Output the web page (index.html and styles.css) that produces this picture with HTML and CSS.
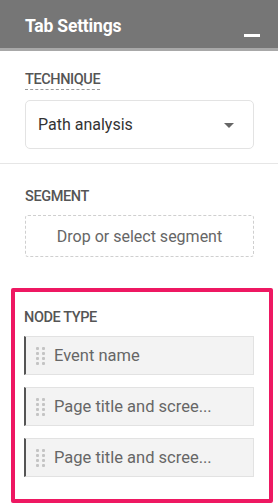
FILE: index.html
```html
<!DOCTYPE html>
<html>
<head>
<meta charset="utf-8">
<link rel="stylesheet" href="styles.css">
</head>
<body>
<div class="panel">
  <div class="header">
    <span class="title">Tab Settings</span>
    <span class="minimize"></span>
  </div>
  <div class="section first">
    <div class="label dashed">TECHNIQUE</div>
    <div class="dropdown">
      <span>Path analysis</span>
      <svg class="caret" width="10" height="5" viewBox="0 0 10 5"><path d="M0 0 L10 0 L5 5 Z" fill="#666"/></svg>
    </div>
  </div>
  <div class="section second">
    <div class="label">SEGMENT</div>
    <div class="dropzone">Drop or select segment</div>
  </div>
  <div class="highlight">
    <div class="label">NODE TYPE</div>
    <div class="items">
      <div class="item"><span class="grip"><i></i><i></i><i></i><i></i><i></i><i></i><i></i><i></i></span><span class="text">Event name</span></div>
      <div class="item"><span class="grip"><i></i><i></i><i></i><i></i><i></i><i></i><i></i><i></i></span><span class="text">Page title and scree...</span></div>
      <div class="item"><span class="grip"><i></i><i></i><i></i><i></i><i></i><i></i><i></i><i></i></span><span class="text">Page title and scree...</span></div>
    </div>
  </div>
</div>
</body>
</html>
```
FILE: styles.css
```css
* { box-sizing: border-box; }
html, body { margin: 0; padding: 0; background: #fff; }
body { font-family: Roboto, "Noto Sans", Arial, sans-serif; width: 278px; height: 504px; overflow: hidden; }
.panel { width: 278px; }
.header {
  height: 51px;
  background: #767676;
  border-bottom: 3px solid #a8a8a8;
  display: flex;
  align-items: center;
  justify-content: space-between;
  padding: 0 18px 0 25px;
}
.title { color: #fff; font-weight: 700; font-size: 17.5px; letter-spacing: -0.2px; margin-top: 3px; }
.minimize { width: 16px; height: 3px; background: #fff; margin-top: 22px; }
.section { padding: 0 24px 0 25px; }
.section.first { padding-top: 21px; padding-bottom: 14px; border-bottom: 1px solid #e6e6e6; }
.section.second { padding-top: 25px; }
.label { font-size: 14.5px; font-weight: 500; color: #555; line-height: 16px; letter-spacing: -0.4px; }
.label.dashed { width: fit-content; border-bottom: 1px dashed #9a9a9a; padding-bottom: 1px; }
.dropdown {
  margin-top: 10px;
  height: 49px;
  border: 1px solid #e3e3e3;
  border-radius: 5px;
  display: flex;
  align-items: center;
  justify-content: space-between;
  padding: 0 19px 0 12px;
  font-size: 16px;
  color: #333;
}
.caret { margin-top: 1px; }
.dropzone {
  margin-top: 10px;
  height: 42px;
  border: 1px dashed #cfcfcf;
  border-radius: 3px;
  display: flex;
  align-items: center;
  justify-content: center;
  font-size: 16px;
  color: #666;
}
.highlight {
  margin: 31px 5px 0 11px;
  border: 4px solid #ee1862;
  border-radius: 2px;
  padding: 18px 15px 22px 9px;
}
.items { display: flex; flex-direction: column; gap: 12px; margin-top: 10px; }
.item {
  height: 39px;
  background: #f3f3f3;
  border: 1px solid #e2e2e2;
  border-left: 2px solid #555;
  display: flex;
  align-items: center;
  padding-left: 10px;
}
.grip {
  display: grid;
  grid-template-columns: 3px 3px;
  grid-auto-rows: 3px;
  column-gap: 3px;
  row-gap: 2px;
  margin-right: 9px;
}
.grip i { display: block; width: 3px; height: 3px; background: #c4c4c4; border-radius: 1px; }
.text { font-size: 16.5px; color: #666; }
```
